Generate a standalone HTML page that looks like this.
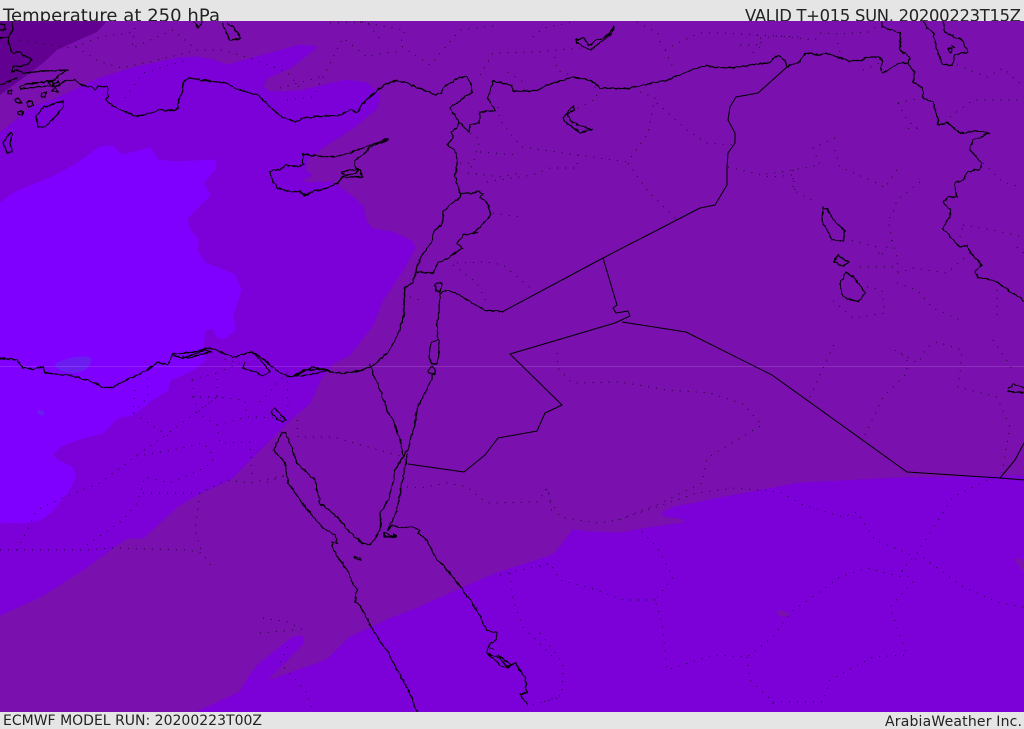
<!DOCTYPE html>
<html><head><meta charset="utf-8"><title>Temperature at 250 hPa</title>
<style>
html,body{margin:0;padding:0;background:#e5e5e5;width:1024px;height:729px;overflow:hidden}
svg{display:block;position:absolute;left:0;top:0}
text{font-family:"DejaVu Sans","Liberation Sans",sans-serif;fill:#222}
</style></head><body>
<svg width="1024" height="729" viewBox="0 0 1024 729" xmlns="http://www.w3.org/2000/svg">
<defs><filter id="w" filterUnits="userSpaceOnUse" x="0" y="0" width="1024" height="729"><feTurbulence type="fractalNoise" baseFrequency="0.22" numOctaves="2" seed="4"/><feDisplacementMap in="SourceGraphic" scale="3.2" xChannelSelector="R" yChannelSelector="G"/></filter></defs>
<rect width="1024" height="729" fill="#e5e5e5"/>
<text x="3" y="21.5" font-size="18" textLength="217" lengthAdjust="spacing">Temperature at 250 hPa</text>
<text x="1021" y="21.5" font-size="16.4" text-anchor="end" textLength="276" lengthAdjust="spacing">VALID T+015 SUN. 20200223T15Z</text>
<text x="3" y="725" font-size="14" textLength="259" lengthAdjust="spacing">ECMWF MODEL RUN: 20200223T00Z</text>
<text x="1022" y="726" font-size="14" text-anchor="end" textLength="137" lengthAdjust="spacing">ArabiaWeather Inc.</text>
<svg x="0" y="21" width="1024" height="691" viewBox="0 21 1024 691">
<rect x="0" y="21" width="1024" height="691" fill="#7a10ae"/>
<path fill="#620091" d="M0 21H107L97 32 72 43 57 50 43 63 23 78 0 95Z"/>
<path fill="#7c00d8" stroke="#7c00d8" stroke-linejoin="round" d="M0 133 33 107 60 97 100 78 133 68 177 58 197 57 213 60 227 65 253 58 300 45 317 47 307 55 290 68 267 78 263 87 270 92 300 91 333 83 347 80 367 83 380 95 377 108 353 128 323 147 307 160 305 170 312 175 302 180 308 183 333 182 353 197 363 207 367 223 373 229 393 232 413 242 415 248 403 270 392 287 383 300 373 325 350 355 333 363 320 380 310 403 290 420 267 443 230 480 200 493 177 507 143 538 127 538 110 550 83 570 40 597 0 615Z"/>
<path fill="#7c00d8" stroke="#7c00d8" stroke-linejoin="round" d="M197 712 240 692 250 675 260 663 293 637 302 636 304 643 290 657 270 677 268 681 293 672 327 660 350 637 387 620 413 610 440 598 462 588 497 573 553 555 560 547 573 530 590 532 620 533 660 526 685 523 684 519 665 516 662 513 675 507 720 498 800 483 900 478 1024 476V712Z"/>
<path fill="#7a10ae" d="M1014 559 1020 558 1024 562V572L1019 566ZM776 612 782 610 790 614 788 617 780 616Z"/>
<path fill="#8000ff" stroke="#8000ff" stroke-linejoin="round" d="M0 203 15 192 50 178 75 165 100 147 112 146 122 155 150 148 158 160 175 162 215 160 216 168 203 183 210 195 195 210 187 218 190 230 198 240 197 250 205 263 235 275 241 290 233 315 235 330 225 338 218 338 212 328 205 330 203 347 205 360 193 370 170 380 168 390 152 400 133 415 117 418 103 433 83 438 63 445 52 455 57 460 72 467 76 477 67 493 50 513 40 520 23 523 0 522Z"/>
<path fill="#6b1df0" d="M55 364C65 358 85 354 91 358 92 366 85 372 75 373 65 373 55 370 55 364ZM37 411 42 410 45 413 42 416 38 414Z"/>
<path stroke="#fff" stroke-opacity=".13" d="M0 366.5H1024"/>
<!-- dotted admin borders -->
<path fill="none" stroke="#000" stroke-width=".9" stroke-dasharray="1 7" stroke-opacity=".8" d="M557 353 558 368 572 383 620 382 667 390 710 393 743 404 762 425 707 458 702 483 663 502 618 520 597 523 560 517 550 500 548 488 543 492M618 520 697 493 735 488 780 492 803 505 843 517 857 512 875 540 907 553 917 560M987 480 953 497 917 553 902 570 902 577 867 568 840 577 790 613 773 637 747 657 713 655 667 670 662 623 655 600 673 577 657 547 640 530M655 600 623 600 597 590 560 580 550 563 540 567M747 657 750 680 773 702 772 710M773 702 823 702 830 680 873 657 907 655 890 607 913 582 902 570M917 553 963 587 1000 603 1024 607M540 633 563 663 562 695 540 703M810 397 835 342M865 435 883 397 907 373 907 358 895 350 918 363 927 347 937 342 962 350 960 373 958 387 997 397 1010 427 1002 473M993 340 1013 370M760 38 780 36 815 40 820 33 840 34 870 32 878 25M838 43 840 52M863 70 880 63M898 103 920 98M898 103 907 120 917 128 902 129M957 65 987 77 1003 68 1024 87M950 117 973 100 1017 100 1024 103M983 163 1003 182 1020 187M963 225 993 230 1024 237M960 237 963 225M1017 247 1024 253M835 138 813 148 820 165 793 170 760 175M793 170 793 190 815 202M835 150 840 167 877 183 885 188 898 168M920 182 897 200 893 213 888 220 892 240 880 257 877 247 850 240M892 240 897 257 898 277M860 267 897 267M970 253 947 273 913 268 898 273M897 283 917 290 933 308 960 320M867 287 882 290 885 313 853 318 830 298M997 290 997 320M480 75 493 53 537 52 557 50 580 48M533 37 543 28 573 22M555 57 557 70 575 77M637 22 658 33 660 43M665 50 680 42 700 33 723 33 757 35 800 37M665 50 675 72M757 35 762 45 733 45M753 53 762 45M595 87 597 98 575 110M640 92 655 98 653 107 648 133 635 152 627 162M657 103 687 130 707 143 733 145M498 107 500 120 513 137 522 147 578 155 627 162M508 72 523 82M480 152 518 155M578 155 577 168 550 168 533 175 480 183M628 163 647 190 677 220M728 167 770 177 793 175 795 193M470 133 480 140 473 163 468 173M460 163 473 163M468 173 500 177 520 173M493 213 520 217M457 263 487 262 503 265 533 290M453 265 477 283 487 303M410 297 420 300M135 28 132 48 173 30 197 50M76 47 100 62 122 68 170 57 197 50 222 50 250 58 287 72 300 88M125 98 143 73 187 60M287 100 313 97 320 83 343 38 367 57 383 53 400 52M280 88 320 77M330 23 367 22 383 43M20 40 70 48 80 45 100 37 135 32M360 22 405 30 400 45 430 65 460 30 500 25M0 550 87 550 112 548 187 550 202 553 213 568M17 550 37 510 62 498 100 483 140 453 163 437 217 397 243 400M87 545 123 520 137 503 145 477 170 483 200 470 213 462 210 450 203 443 173 450 130 457M143 493 200 493 227 480 250 483 287 475M200 493 195 530 202 553M135 390 133 413 170 437M147 370 148 397 133 413M192 380 197 413 217 425 220 443 250 442 252 477M192 380 217 373 217 397 197 413M217 373 240 363 218 358M217 425 247 417 287 418M245 402 247 417M260 402 287 373 288 410M192 397 217 397M297 420 298 437 333 437 400 456M263 618 288 622 303 630M260 633 293 630M288 647 280 663 293 677 307 693 312 710M407 487 420 488 447 483 467 487 487 503 537 502 548 488 552 513M510 573 513 600 523 627 553 657M500 575 550 563M533 705 560 697M267 482 287 475"/>
<!-- wiggly coasts -->
<g fill="none" stroke="#000" stroke-width="1.2" stroke-linejoin="round" filter="url(#w)">
<path d="M13 72 18 70 23 73 45 71 68 70 60 74 55 80 48 82 52 85 58 81 60 85 54 88 52 91 58 92 55 87 63 82 67 80 75 80 83 86 92 87 95 90 97 86 107 87 108 95 106 100 112 105 120 110 128 113 133 114 132 116 140 116 147 114 160 110 175 110 178 108 178 100 183 92 183 82 190 78 200 80 225 83 240 90 258 95 270 107 282 117 295 122 303 118 315 117 340 115 350 110 357 113 363 103 372 95 385 84 395 81 405 82 412 85 428 92 436 95 441 93 445 86 460 77 467 77 471 83 472 92 465 97 450 108 459 122 457 128 451 132 453 138 447 145 455 150 457 160 455 177 460 193 460 198 452 203 443 212 442 225 434 231 432 242 423 253 415 272 413 283 405 287 404 300 404 315 398 335 388 352 375 364 360 371 345 373 333 373 328 370 313 367 293 377 283 375 270 365 262 358 252 352 233 357 210 348 187 353 172 354 168 365 157 362 147 370 113 387 105 388 87 380 68 375 45 373 43 367 33 369 23 368 17 360 0 358"/>
<path d="M12 21 13 30 8 38 0 38M8 38 10 48 12 53 20 52 24 56 30 58 32 60 28 65 13 67 12 72 18 70"/>
<path d="M0 24H5V30H0M20 86 33 83 53 81 54 86 48 86 20 89ZM0 85 12 80 17 78 5 83 0 85M8 91 12 90 11 94 8 93ZM42 94 46 92 45 97 41 96ZM27 102 32 101 33 106 28 106ZM15 99 18 98 22 103 16 102ZM17 112 23 111 22 115 18 114Z"/>
<path d="M63 101 43 107 36 117 38 127 45 127 57 115 63 107ZM10 133 3 143 7 153 12 152 10 143 12 134ZM193 21 198 28 203 21M222 23 230 41 241 38 233 27 227 23"/>
<path d="M303 154 303 165 298 167 285 165 280 170 272 170 270 172 273 182 278 188 290 192 300 191 303 195 308 195 310 192 327 188 338 183 342 177 363 177 360 170 355 167 355 160 363 155 370 147 388 140 387 139 363 148 340 156 330 157Z"/>
<path d="M342 172 358 169 356 174 344 175Z"/>
<path d="M460 193 475 193 477 191 483 194 480 197 487 203 491 215 482 225 473 233 478 233 463 235 457 243 462 248 450 257 438 263 433 273 415 272"/>
<path d="M459 122 469 132 470 125 479 123 480 112 495 110 488 98 493 81 512 85 513 91 535 91 547 85 573 77 590 80 600 88 625 89 667 80 687 72 703 66 727 68 768 63 778 55 785 60 787 67 800 62 805 53 820 55 825 53 850 61 860 61 867 57 880 57 883 62 880 67 883 73 888 70 900 63 908 63"/>
<path d="M502 312 485 310 472 303 460 295 447 290 440 293 439 310 437 325 438 340 431 343 429 353 431 363 437 364 439 350 439 340M431 366 428 372 434 375 436 370 431 366M433 375 426 392 418 405 415 423 408 450 403 457 395 470 392 487 388 500 380 513 381 528 373 542 370 545 362 543 350 533 337 517 320 503 317 490 315 480 297 463 292 448 285 432 282 432 280 437 273 450 285 462 288 483 298 497 310 513 323 528 335 535 337 543 332 542 333 550 342 563 349 573 352 582 357 590 355 602 360 605 373 630 388 652 397 670 410 693 417 712"/>
<path d="M436 291C434 286 436 282 440 283 443 285 442 291 438 292ZM369 363 384 400 387 410 393 420 400 440 403 456"/>
<path d="M408 454 405 468 400 493 397 510 390 525 388 530 392 525 400 528 412 527 420 530 418 533 427 540 435 557 450 573 463 590 477 610 487 630 497 633 497 638 493 643 490 643 487 653 500 658 507 667 515 663 525 677 527 693 520 695 528 705"/>
<path d="M384 533 389 535 395 536 390 537 384 536ZM394 534 396 537 393 537ZM354 557 360 558 361 561 356 559ZM487 653 500 665 508 668 512 665 498 655M490 648 494 650"/>
<path d="M882 22 882 27 892 30 900 33 900 50 910 58 908 63 910 68 915 72 913 82 923 88 923 98 933 102 938 120 938 124 948 123 960 133 977 131 990 133 973 140 970 150 982 163 980 170 968 171 963 180 955 183 957 197 948 197 943 203 950 209 950 217 942 228 960 247 967 245 970 252 982 265 975 272 978 278 993 280 1024 301"/>
<path d="M923 21 927 28 933 32 937 50 943 65 952 65 955 55 968 52 962 40 945 33 943 22M948 49 952 48 951 53ZM951 46 955 47"/>
<path d="M823 208 822 220 832 240 843 241 845 230 835 222 827 209ZM838 255 834 261 843 267 849 262 842 258ZM846 272 840 283 843 297 858 302 865 293 855 278Z"/>
<path d="M573 106 563 118 567 123 580 133 592 129 585 127 573 123 567 115 574 110ZM576 40 584 38 589 46 596 40 603 38 610 33 614 26 612 33 606 38 598 44 591 50 584 47 577 43ZM1008 389 1013 384 1020 386 1024 388M1008 391 1015 392 1024 393"/>
<path d="M271 412 275 408 281 415 286 420 283 422 276 418ZM245 362 243 368 256 372 262 376 270 372 262 362 252 352"/>
<path d="M172 355 182 358 205 350 211 352 188 358 182 356M293 376 305 370 322 369 328 370 315 374 300 376"/>
</g>
<!-- straight political borders -->
<g fill="none" stroke="#000" stroke-width="1" stroke-linejoin="round">
<path d="M787 67 758 93 736 97 730 107 728 120 735 133 735 143 728 153 727 167 727 185 715 205 700 208 603 258 502 312"/>
<path d="M603 258 617 305 613 308 616 313 628 311 630 316 615 323 510 354 562 405 545 413 537 431 498 438 485 455 464 472 408 464M622 322 686 332 772 375 907 472 1000 478 1024 480M1000 478 1015 460 1024 443"/>
</g>
</svg>
</svg>
</body></html>
